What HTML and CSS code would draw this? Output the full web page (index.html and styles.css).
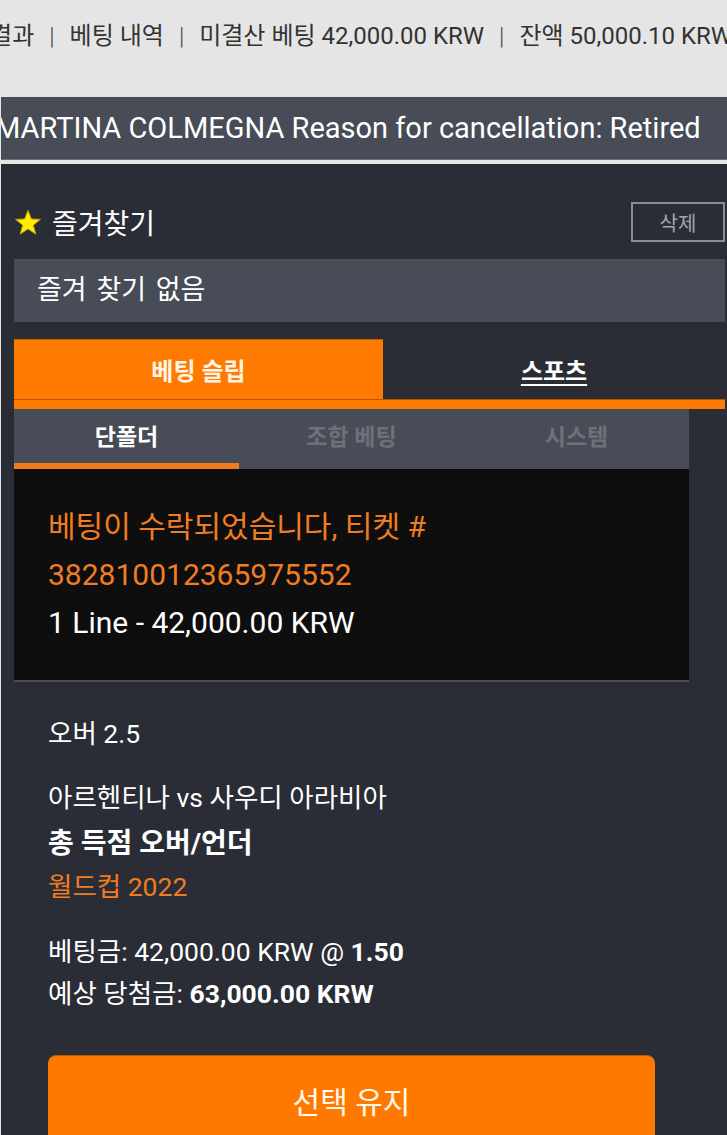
FILE: index.html
```html
<!DOCTYPE html>
<html lang="ko">
<head>
<meta charset="utf-8">
<title>베팅 슬립</title>
<link rel="stylesheet" href="styles.css">
</head>
<body>
<div class="topbar">
  <div class="toplinks">
    <span>경기 결과</span><span class="sep">|</span><span>베팅 내역</span><span class="sep">|</span><span>미결산 베팅 42,000.00 KRW</span><span class="sep">|</span><span>잔액 50,000.10 KRW</span>
  </div>
</div>
<div class="notice"><span class="notice-text">MARTINA COLMEGNA Reason for cancellation: Retired</span></div>
<div class="panel">
  <div class="fav-head">
    <div class="fav-title">
      <svg class="star" width="28" height="27" viewBox="0 0 24 23"><polygon points="12,1 14.9,8.4 22.8,8.8 16.6,13.8 18.7,21.5 12,17.1 5.3,21.5 7.4,13.8 1.2,8.8 9.1,8.4" fill="#ffee00" stroke="#b39b00" stroke-width="0.8" stroke-linejoin="round"/></svg>
      <span>즐겨찾기</span>
    </div>
    <div class="del-btn">삭제</div>
  </div>
  <div class="fav-empty">즐겨 찾기 없음</div>
  <div class="main-tabs">
    <div class="main-tab active">베팅 슬립</div>
    <div class="main-tab"><span class="ul">스포츠</span></div>
  </div>
  <div class="strip"></div>
  <div class="content">
    <div class="sub-tabs">
      <div class="sub-tab active">단폴더</div>
      <div class="sub-tab">조합 베팅</div>
      <div class="sub-tab">시스템</div>
    </div>
    <div class="accepted">
      <div class="orange">베팅이 수락되었습니다, 티켓 #</div>
      <div class="orange">382810012365975552</div>
      <div>1 Line - 42,000.00 KRW</div>
    </div>
    <div class="details">
      <div class="pick">오버 2.5</div>
      <div class="match">아르헨티나 vs 사우디 아라비아</div>
      <div class="market">총 득점 오버/언더</div>
      <div class="league">월드컵 2022</div>
      <div class="stake">베팅금: 42,000.00 KRW @ <b>1.50</b></div>
      <div class="win">예상 당첨금: <b>63,000.00 KRW</b></div>
      <div class="keep-btn">선택 유지</div>
    </div>
  </div>
</div>
</body>
</html>
```
FILE: styles.css
```css
* { box-sizing: border-box; }
html, body { margin: 0; padding: 0; }
body {
  background: #e5e5e5;
  font-family: Roboto, "Noto Sans CJK KR", sans-serif;
  color: #fff;
  overflow: hidden;
  width: 727px;
  height: 1135px;
}
.topbar {
  height: 97px;
  overflow: hidden;
  padding-top: 20px;
}
.toplinks {
  white-space: nowrap;
  font-size: 24px;
  line-height: 32px;
  color: #333;
  margin-left: -60px;
}
.sep {
  color: #444;
  margin: 0 15px;
  font-weight: 300;
}
.notice {
  margin-left: 1px;
  height: 63px;
  background: #474c57;
  overflow: hidden;
  white-space: nowrap;
  font-size: 29px;
  line-height: 63px;
  border-bottom: 1px solid #6b6f78;
}
.notice-text { margin-left: -6px; }
.panel {
  margin-left: 1px;
  margin-top: 4px;
  background: #2a2d36;
  padding: 38px 2px 0 13px;
  height: 975px;
}
.fav-head {
  display: flex;
  justify-content: space-between;
  align-items: center;
  height: 40px;
}
.fav-title {
  display: flex;
  align-items: center;
  gap: 10px;
  font-size: 28px;
}
.star { display: block; }
.del-btn {
  width: 94px;
  height: 40px;
  border: 2px solid #8a8d93;
  color: #a3a6ab;
  font-size: 20px;
  display: flex;
  align-items: center;
  justify-content: center;
}
.fav-empty {
  margin-top: 17px;
  height: 63px;
  background: #474c57;
  font-size: 27px;
  line-height: 63px;
  padding-left: 23px;
  word-spacing: 3px;
}
.main-tabs {
  margin-top: 17px;
  display: flex;
  height: 60px;
}
.main-tab {
  display: flex;
  align-items: center;
  justify-content: center;
  font-size: 24px;
  font-weight: 700;
  flex: 1 1 0;
}
.main-tab.active {
  flex: 0 0 369px;
  background: #ff7a00;
  border-top: 1px solid #c45c00;
  color: #fff4e6;
}
.ul {
  text-decoration: underline;
  text-underline-offset: 4px;
  text-decoration-thickness: 2px;
}
.strip {
  height: 10px;
  background: #ff7a00;
  border-top: 1px solid #b85500;
}
.content {
  width: 675px;
}
.sub-tabs {
  display: grid;
  grid-template-columns: 1fr 1fr 1fr;
  height: 60px;
  background: #474c57;
}
.sub-tab {
  display: flex;
  align-items: center;
  justify-content: center;
  font-size: 23px;
  font-weight: 700;
  color: #6d717a;
  padding-bottom: 8px;
}
.sub-tab.active {
  color: #fff;
  border-bottom: 6px solid #f27a1a;
  padding-bottom: 2px;
}
.accepted {
  background: #0e0e0e;
  padding: 34px 34px 33px;
  font-size: 30px;
  line-height: 48px;
  border-bottom: 2px solid #474c57;
}
.orange { color: #f07d22; }
.details {
  padding: 32px 34px 0;
  font-size: 26.5px;
}
.pick { line-height: 40px; }
.match { margin-top: 24px; line-height: 40px; }
.market { font-weight: 700; font-size: 28px; line-height: 52px; }
.league { color: #f07d22; line-height: 34px; }
.stake { margin-top: 27px; line-height: 42px; }
.win { line-height: 42px; }
.stake b, .win b { font-weight: 700; }
.keep-btn {
  margin-top: 40px;
  height: 90px;
  background: #ff7800;
  border-radius: 8px;
  border-top: 1px solid #c05800;
  display: flex;
  justify-content: center;
  padding-top: 22px;
  font-size: 30px;
  color: #fff8ec;
}
```
